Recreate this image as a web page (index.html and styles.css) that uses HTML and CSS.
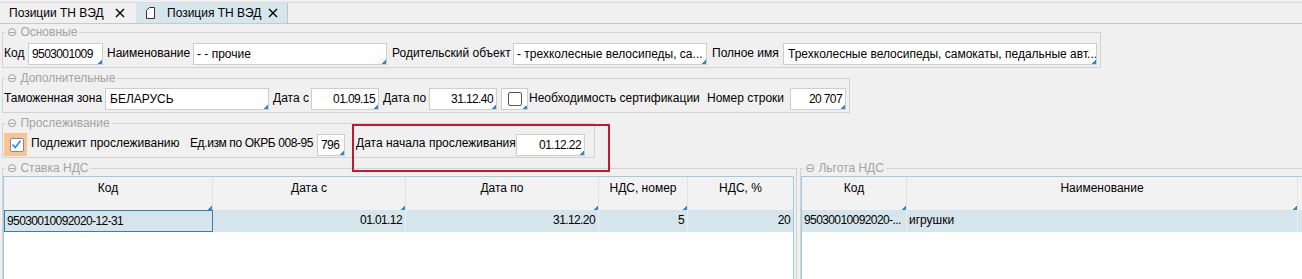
FILE: index.html
```html
<!DOCTYPE html>
<html lang="ru">
<head>
	<meta charset="UTF-8">
	<title>Позиция ТН ВЭД</title>
	<link rel="stylesheet" href="styles.css">
</head>
<body>
	<div class="tabs">
		<div class="tab">
			<span>Позиции ТН ВЭД</span>
			<svg class="x" width="10" height="10" viewBox="0 0 10 10"><path d="M1 1L9 9M9 1L1 9" stroke="#000" stroke-width="1.4"/></svg>
		</div>
		<div class="tab active">
			<svg class="doc" width="9" height="12" viewBox="0 0 9 12"><path d="M3.5 0.5H8.5V11.5H0.5V3.5Z" fill="#fff" stroke="#333"/></svg>
			<span>Позиция ТН ВЭД</span>
			<svg class="x" width="10" height="10" viewBox="0 0 10 10"><path d="M1 1L9 9M9 1L1 9" stroke="#000" stroke-width="1.4"/></svg>
		</div>
	</div>

	<fieldset class="grp g1">
		<legend><span class="ic">⊖</span> Основные</legend>
		<div class="row">
			<span class="lbl l-kod">Код</span>
			<span class="inp i-kod dg">9503001009</span>
			<span class="lbl l-name">Наименование</span>
			<span class="inp i-194">- - прочие</span>
			<span class="lbl l-parent">Родительский объект</span>
			<span class="inp i-194">- трехколесные велосипеды, са...</span>
			<span class="lbl l-full">Полное имя</span>
			<span class="inp i-full">Трехколесные велосипеды, самокаты, педальные авт...</span>
		</div>
	</fieldset>

	<fieldset class="grp g2">
		<legend><span class="ic">⊖</span> Дополнительные</legend>
		<div class="row">
			<span class="lbl l-zone">Таможенная зона</span>
			<span class="inp i-zone">БЕЛАРУСЬ</span>
			<span class="lbl l-from">Дата с</span>
			<span class="inp i-date num dg">01.09.15</span>
			<span class="lbl l-to">Дата по</span>
			<span class="inp i-date num dg">31.12.40</span>
			<span class="chk-frame"><span class="box"></span></span>
			<span class="lbl l-cert">Необходимость сертификации</span>
			<span class="lbl l-line">Номер строки</span>
			<span class="inp i-line num dg">20 707</span>
		</div>
	</fieldset>

	<fieldset class="grp g3">
		<legend><span class="ic">⊖</span> Прослеживание</legend>
		<div class="row">
			<span class="chk-on"><span class="box"><svg width="11" height="11" viewBox="0 0 11 11"><path d="M1.5 5.5L4.3 8.5L9.5 1.8" fill="none" stroke="#2f7fd6" stroke-width="1.5"/></svg></span></span>
			<span class="lbl l-track">Подлежит прослеживанию</span>
			<span class="lbl l-unit">Ед.изм по ОКРБ 008-95</span>
			<span class="inp i-unit dg">796</span>
			<span class="lbl l-start">Дата начала прослеживания</span>
			<span class="inp i-start num dg">01.12.22</span>
		</div>
	</fieldset>

	<div class="bottom">
		<fieldset class="grp g4">
			<legend><span class="ic">⊖</span> Ставка НДС</legend>
			<div class="grid vat">
				<div class="hc">Код</div>
				<div class="hc">Дата с</div>
				<div class="hc">Дата по</div>
				<div class="hc">НДС, номер</div>
				<div class="hc last">НДС, %</div>
				<div class="dc focus dg">95030010092020-12-31</div>
				<div class="dc num dg">01.01.12</div>
				<div class="dc num dg">31.12.20</div>
				<div class="dc num dg">5</div>
				<div class="dc num dg last">20</div>
			</div>
		</fieldset>
		<fieldset class="grp g5">
			<legend><span class="ic">⊖</span> Льгота НДС</legend>
			<div class="grid benefit">
				<div class="hc">Код</div>
				<div class="hc">Наименование</div>
				<div class="hc last"></div>
				<div class="dc dg">95030010092020-...</div>
				<div class="dc">игрушки</div>
				<div class="dc last"></div>
			</div>
		</fieldset>
	</div>

	<div class="mark"></div>
</body>
</html>
```

FILE: styles.css
```css
body{margin:0;background:#f0f0f0;font-family:"Liberation Sans","Noto Sans",sans-serif;font-size:12px;color:#000;width:1302px;height:279px;overflow:hidden;position:relative}

/* tabs */
.tabs{display:flex;height:20px;margin-top:2px;border-top:1px solid #dcdcdc;border-bottom:1px solid #c9c9c9}
.tab{display:flex;align-items:center;width:127px;padding-left:9px;white-space:nowrap}
.tab .x{margin-left:auto;margin-right:11px}
.tab.active{width:141px;padding-left:10px;background:#d5e6ec;border-right:1px solid #c4c4c4}
.tab.active .doc{margin-right:12px}
.tab.active .x{margin-right:9px}

/* group boxes */
.grp{margin:0 0 0 2px;border:1px solid #d3d3d3;padding:0 0 2px 0;min-width:0;box-sizing:border-box;flex-shrink:0}
.grp legend{height:14px;padding:0 2px;margin-left:2px;color:#a3a3a3;line-height:14px;white-space:nowrap}
.grp legend .ic{font-family:"DejaVu Sans",sans-serif;font-size:12px;line-height:1}
.g1{width:1099px;margin-top:1px}
.g2{width:848px;margin-top:3px}
.g3{width:593px;margin-top:3px;padding-bottom:1px}
.row{display:flex;align-items:center;white-space:nowrap}
.g1 .row{margin-top:4px}
.g2 .row,.g3 .row{margin-top:3px}

.lbl{display:block;box-sizing:border-box;padding:0 0 3px 4px;overflow:hidden}
.l-kod{width:25px;padding-left:1px}
.l-name{width:90px}
.l-parent{width:126px;padding-left:5px}
.l-full{width:76px;padding-left:5px}
.l-zone{width:102px;padding-left:1px}
.l-from{width:42px}
.l-to{width:50px}
.l-cert{width:179px;padding-left:1px}
.l-line{width:83px;padding-left:0}
.l-track{width:163px}
.l-unit{width:127px;padding-left:0;letter-spacing:-0.4px}
.l-start{width:171px;padding-left:11px}

.inp{display:block;box-sizing:border-box;height:22px;line-height:20px;padding:0 3px 0 4px;border:1px solid #cdcdcd;overflow:hidden;
	background:linear-gradient(135deg,transparent 50%,#2b8bd2 50%) right bottom/4px 4px no-repeat,#fff}
.num{text-align:right}
.dg{letter-spacing:-0.6px}
.i-kod{width:75px;padding-left:3px}
.i-194{width:194px;padding-left:3px}
.i-full{width:314px}
.i-zone{width:164px}
.i-date{width:68px}
.i-line{width:56px}
.i-unit{width:28px;padding-left:3px}
.i-start{width:69px}

.chk-frame{display:flex;align-items:center;justify-content:center;box-sizing:border-box;width:27px;height:22px;margin-left:4px;border:1px solid #cdcdcd;
	background:linear-gradient(135deg,transparent 50%,#2b8bd2 50%) right bottom/4px 4px no-repeat,#fff}
.box{display:flex;align-items:center;justify-content:center;box-sizing:border-box;width:14px;height:14px;border:1px solid #555;border-radius:2px;background:#fff}
.chk-on{display:flex;align-items:center;justify-content:center;width:23px;height:23px;margin-left:1px;padding-left:2px;box-sizing:border-box;background:#fbc48f}
.chk-on .box{border-color:#6b8db5}

/* tables */
.bottom{display:flex;align-items:flex-start}
.g4{width:795px;margin-top:3px;padding:0 2px 0 0;border-bottom:none}
.g5{width:503px;margin:3px 0 0 3px;padding:0;border-bottom:none;border-right:none}
.grid{display:grid;grid-template-rows:33px 22px;align-content:start;height:103px;margin-top:1px;border:1px solid #9dcbe4;border-bottom:none;background:#fff}
.vat{width:791px;box-sizing:border-box;grid-template-columns:209px 193px 193px 89px 105px}
.benefit{grid-template-columns:105px 391px 1fr;border-right:none}
.hc{box-sizing:border-box;padding-top:4px;text-align:center;border-right:1px solid #e3e3e3;
	background:linear-gradient(135deg,transparent 50%,#2b8bd2 50%) right bottom/4px 4px no-repeat,#f2f2f2}
.hc.last{border-right:none}
.vat .hc.last,.benefit .hc.last{background:#f2f2f2}
.dc{box-sizing:border-box;line-height:21px;padding:0 3px 0 2px;background:#d5e5eb;border-right:1px solid #e6eff2;white-space:nowrap;overflow:hidden}
.dc.last{border-right:none}
.dc.focus{border:1px solid #3a7ea8;line-height:20px;padding-left:2px}

/* red highlight drawn over the form */
.mark{position:absolute;left:352px;top:124px;width:258px;height:48px;box-sizing:border-box;border:2px solid #c01a2e}
```
